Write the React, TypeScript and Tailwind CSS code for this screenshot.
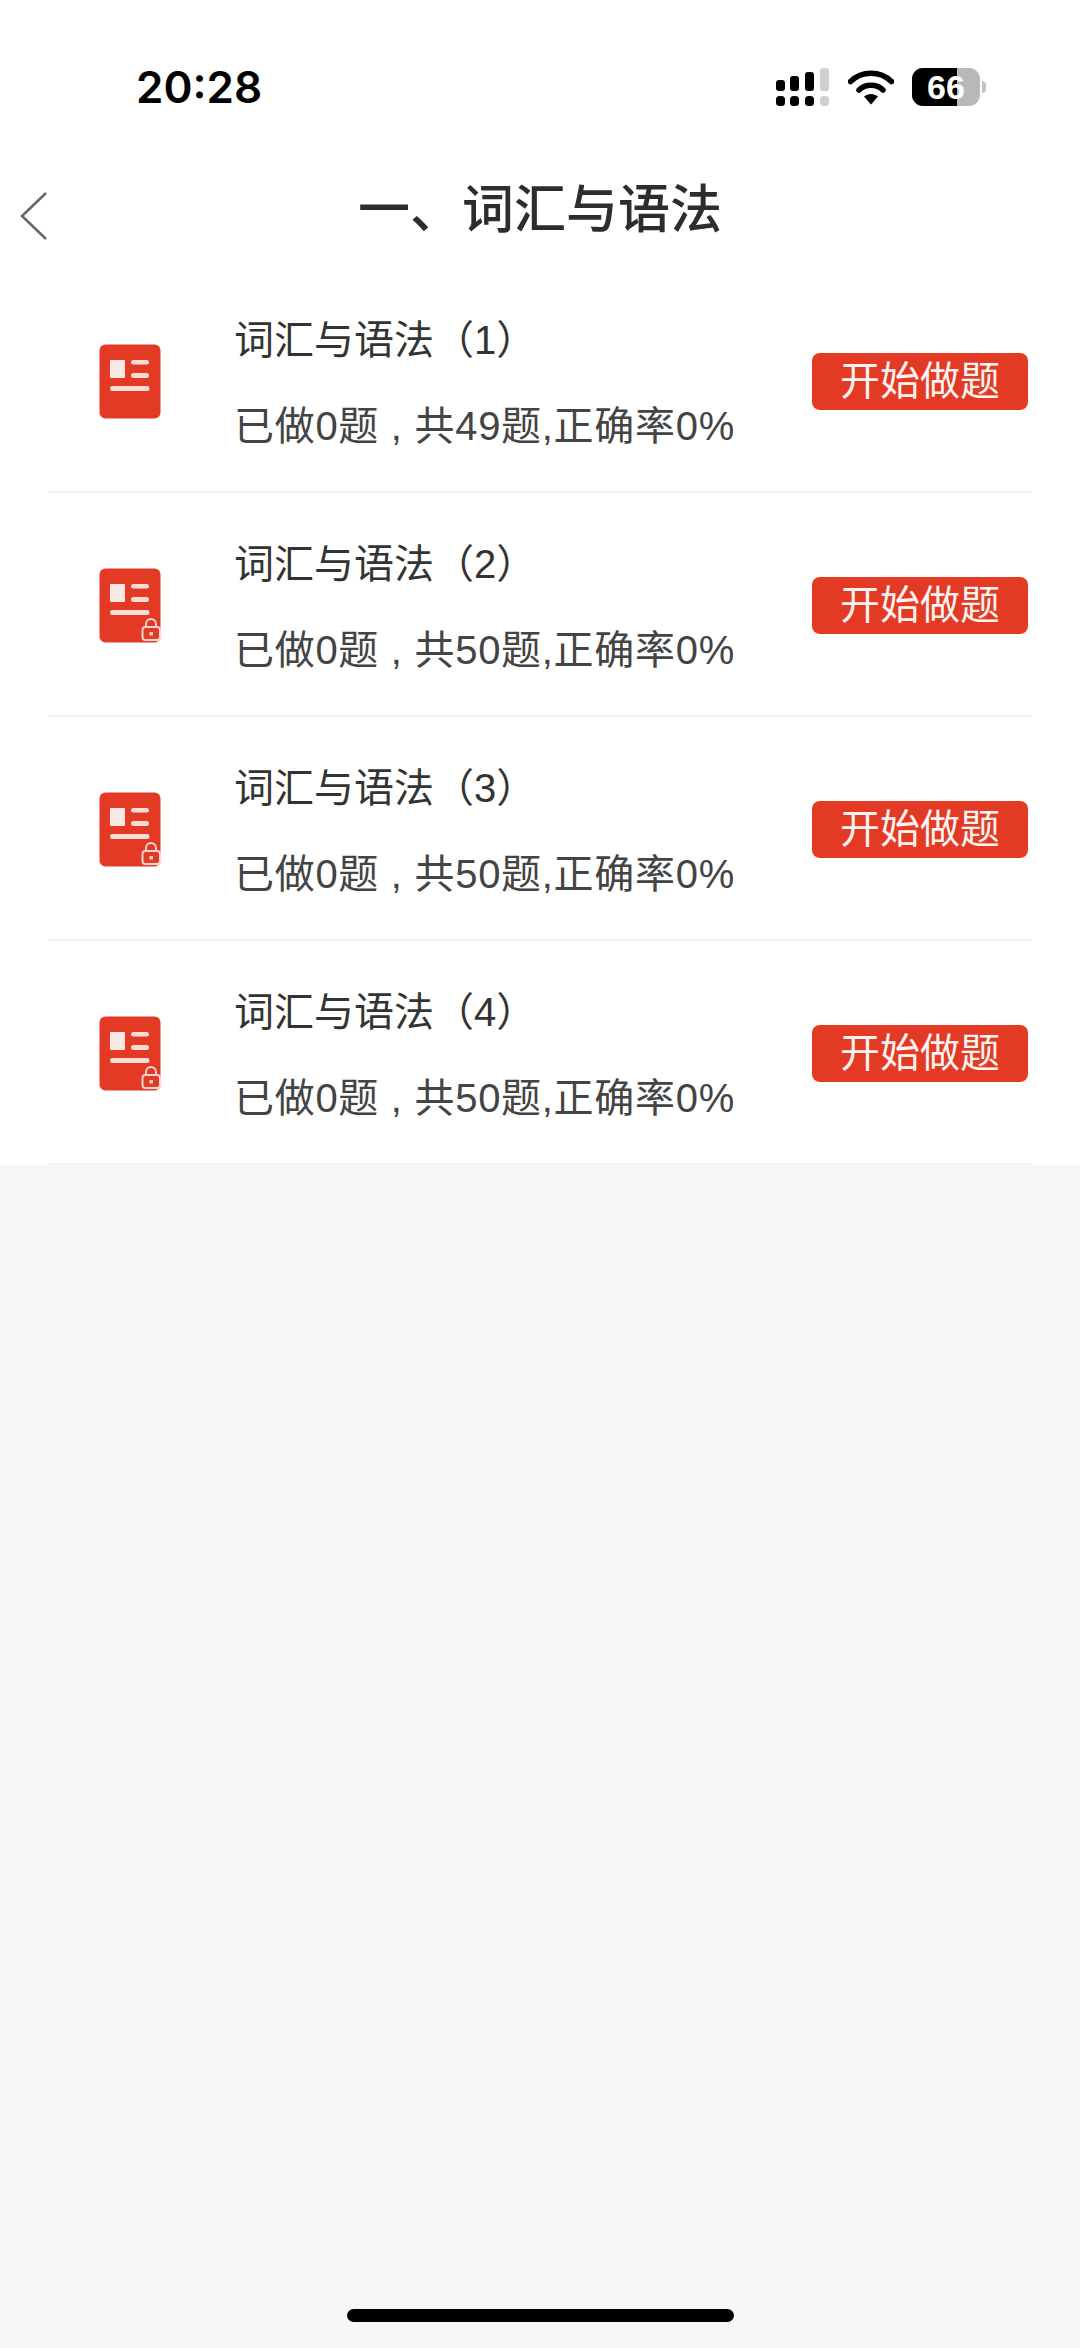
const FONT = "font-['Liberation_Sans','Noto_Sans_CJK_SC',sans-serif]";

const ROWS = [
  { title: "词汇与语法（1）", done: 0, total: 49, locked: false },
  { title: "词汇与语法（2）", done: 0, total: 50, locked: true },
  { title: "词汇与语法（3）", done: 0, total: 50, locked: true },
  { title: "词汇与语法（4）", done: 0, total: 50, locked: true },
];

function SignalIcon() {
  return (
    <svg width="54" height="38" viewBox="0 0 54 38">
      <rect x="0" y="12" width="9" height="11" rx="3" fill="#000" />
      <rect x="0" y="28" width="9" height="10" rx="3.5" fill="#000" />
      <rect x="14" y="8" width="9" height="15" rx="3" fill="#000" />
      <rect x="14" y="28" width="9" height="10" rx="3.5" fill="#000" />
      <rect x="29" y="4" width="9" height="19" rx="3" fill="#000" />
      <rect x="29" y="28" width="9" height="10" rx="3.5" fill="#000" />
      <rect x="44" y="0" width="9" height="23" rx="3" fill="#cfcfcf" />
      <rect x="44" y="28" width="9" height="10" rx="3.5" fill="#cfcfcf" />
    </svg>
  );
}

function WifiIcon() {
  return (
    <svg width="46" height="36" viewBox="0 0 46 36" fill="none">
      <path d="M2.5 12.5C14 1.500 32 1.500 43.500 12.500" stroke="#000" strokeWidth="5.500" strokeLinecap="round" />
      <path d="M11 21C17.500 14.800 28.500 14.800 35 21" stroke="#000" strokeWidth="5.500" strokeLinecap="round" />
      <path d="M16 27.500C20 24 26 24 30 27.500L23 35.500Z" fill="#000" />
    </svg>
  );
}

function BatteryIcon() {
  return (
    <div className="flex items-center gap-[2px]">
      <div className="relative flex h-[38px] w-[68px] overflow-hidden rounded-[11px] bg-[#b8b8b8]">
        <div className="h-full w-[45px] bg-black" />
        <span className="absolute inset-0 flex items-center justify-center font-['Liberation_Sans',sans-serif] text-[34px] font-bold text-white">
          66
        </span>
      </div>
      <div className="h-[12px] w-[4px] rounded-r-full bg-[#c4c4c4]" />
    </div>
  );
}

// Red document badge, with a small padlock on the exercises not yet open
function PaperIcon({ locked }: { locked: boolean }) {
  return (
    <svg width="63" height="76" viewBox="0 0 63 76">
      <rect x="0.500" y="0.500" width="61" height="74" rx="6" fill="#e33a26" />
      <rect x="11" y="16" width="15" height="18" rx="1" fill="#fbe9e6" />
      <rect x="32" y="16" width="18" height="4.500" rx="2.200" fill="#fbdcd6" />
      <rect x="32" y="29" width="18" height="5" rx="2.200" fill="#fbdcd6" />
      <rect x="11" y="42" width="39.500" height="5" rx="2.200" fill="#fbdcd6" />
      {locked && (
        <g fill="none" stroke="#fbd3cb" strokeWidth="2">
          <path d="M47 59v-3a5 5 0 0 1 10 0v3" />
          <rect x="43.500" y="59" width="17.500" height="13" rx="3" fill="#e33a26" />
          <rect x="50.500" y="64" width="3.500" height="3.500" fill="#fbd3cb" stroke="none" />
        </g>
      )}
    </svg>
  );
}

export default function App() {
  return (
    <div className={`flex h-[2348px] w-[1080px] flex-col overflow-hidden bg-[#f7f7f7] ${FONT}`}>
      <div className="bg-white">
        {/* status bar */}
        <div className="flex h-[108px] items-end justify-between pl-[136px] pr-[94px]">
          <span className="font-['Inter',sans-serif] text-[44px] font-semibold leading-[42px] text-black">20:28</span>
          <div className="flex items-center gap-[18px] pb-[2px]">
            <SignalIcon />
            <WifiIcon />
            <BatteryIcon />
          </div>
        </div>

        {/* nav bar */}
        <div className="relative flex h-[161px] items-start justify-center pt-[73px]">
          <svg className="absolute left-[18px] top-[83px]" width="32" height="50" viewBox="0 0 32 50" fill="none">
            <path d="M28 2 4 25l24 23" stroke="#666" strokeWidth="2.500" />
          </svg>
          <h1 className="text-[52px] font-medium leading-[58px] text-[#2d2d2d]">一、词汇与语法</h1>
        </div>

        {ROWS.map((row) => (
          <div key={row.title} className="mx-[48px] flex h-[224px] items-center border-b-2 border-[#f3f3f3] pr-[4px]">
            <div className="ml-[51px] flex w-[135px] shrink-0 pt-[3px]">
              <PaperIcon locked={row.locked} />
            </div>
            <div className="flex flex-1 flex-col gap-[40px] pt-[6px]">
              <span className="text-[40px] leading-[46px] text-[#333]">{row.title}</span>
              <span className="text-[40px] leading-[46px] tracking-[0.7px] text-[#444]">
                已做{row.done}题 , 共{row.total}题,正确率0%
              </span>
            </div>
            <div className="mt-[2px] flex h-[57px] w-[216px] items-center justify-center rounded-[8px] bg-[#e33a26] text-[40px] text-[#fdf3f0]">
              开始做题
            </div>
          </div>
        ))}
      </div>

      {/* home indicator */}
      <div className="mt-auto flex justify-center pb-[26px]">
        <div className="h-[13px] w-[387px] rounded-full bg-black" />
      </div>
    </div>
  );
}
